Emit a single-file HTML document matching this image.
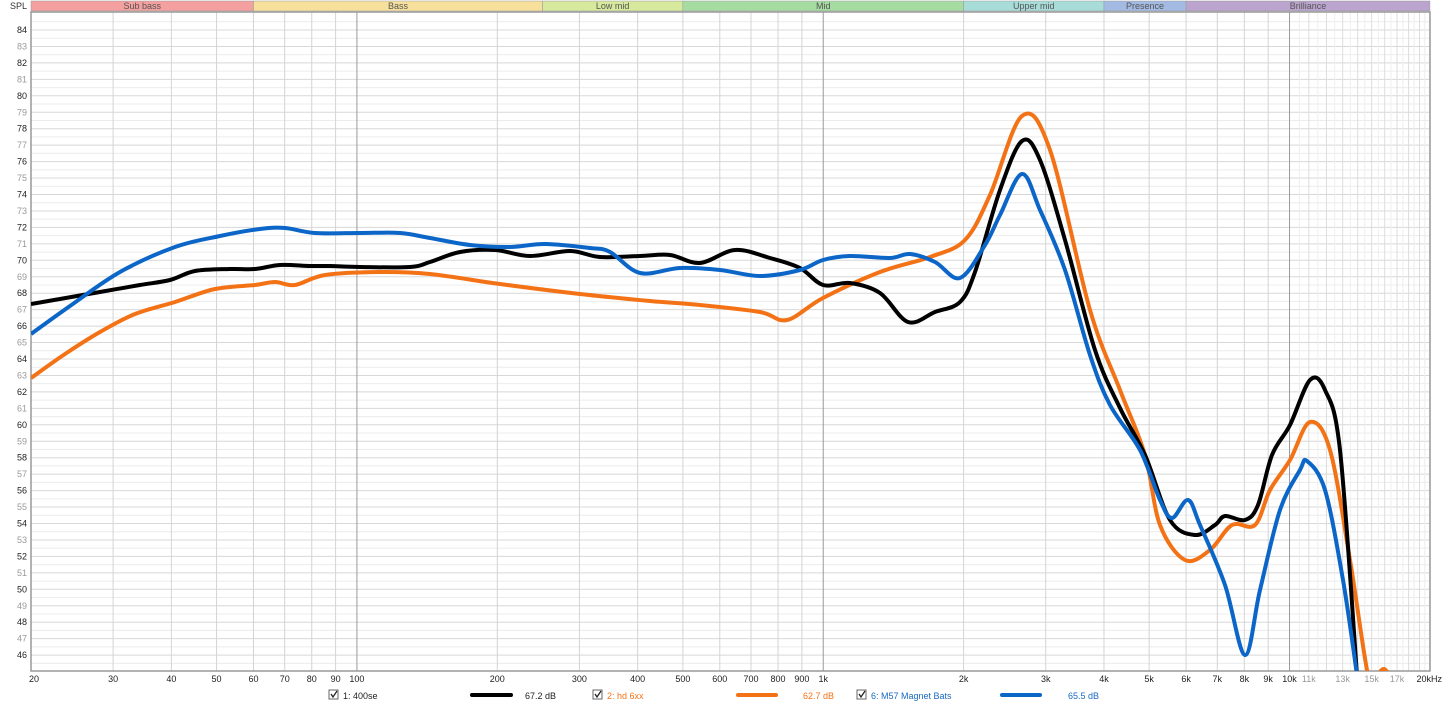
<!DOCTYPE html>
<html><head><meta charset="utf-8"><style>
body{margin:0;background:#fff;width:1445px;height:706px;overflow:hidden;font-family:"Liberation Sans",Arial,sans-serif}
</style></head><body>
<svg id="s" width="1445" height="706" xmlns="http://www.w3.org/2000/svg" font-family="Liberation Sans, Arial, sans-serif"></svg>
<script>
const s=document.getElementById('s');let h='';
const X0=31,X1=1430,Y0=12,Y1=671,D=466.3;
const fx=f=>X0+D*Math.log10(f/20);
const yd=d=>30+(84-d)*16.45;
const bands=[[20,60,'#f4a0a0','Sub bass'],[60,250,'#f7df9c','Bass'],[250,500,'#d6e99c','Low mid'],[500,2000,'#a6dca2','Mid'],[2000,4000,'#a8dcd8','Upper mid'],[4000,6000,'#a3bbe2','Presence'],[6000,20000,'#bba5cf','Brilliance']];
h+=`<text x="27" y="9" font-size="9" text-anchor="end" fill="#333">SPL</text>`;
for(const b of bands){const a=fx(b[0]),c=Math.min(fx(b[1]),X1);h+=`<rect x="${a}" y="1" width="${c-a}" height="10" fill="${b[2]}" stroke="#999" stroke-width="0.5"/><text x="${(a+c)/2}" y="9" font-size="9" text-anchor="middle" fill="#555">${b[3]}</text>`;}
for(let d=84.5;d>=45;d-=0.5){const y=yd(d);if(y<Y0+2||y>Y1)continue;const maj=Number.isInteger(d);h+=`<line x1="${X0}" x2="${X1}" y1="${y}" y2="${y}" stroke="${maj?'#d8d8d8':'#ececec'}" stroke-width="1"/>`;}
for(let d=84;d>=46;d--){h+=`<text x="27" y="${yd(d)+3}" font-size="9" text-anchor="end" fill="${d%2?'#999':'#222'}">${d}</text>`;}
const fs=[];for(let dec=10;dec<=10000;dec*=10)for(let m=1;m<10;m++){const f=dec*m;if(f>=20&&f<=20000)fs.push(f);}fs.push(20000);
for(const f of fs){const x=fx(f);const maj=(f==100||f==1000||f==10000);h+=`<line x1="${x}" x2="${x}" y1="${Y0}" y2="${Y1}" stroke="${maj?'#999':'#d4d4d4'}" stroke-width="1"/>`;}
for(let f=10500;f<20000;f+=500){if(f%1000==0)continue;const x=fx(f);h+=`<line x1="${x}" x2="${x}" y1="${Y0}" y2="${Y1}" stroke="#eee" stroke-width="1"/>`;}
for(const f of [11000,12000,13000,14000,15000,16000,17000,18000,19000]){const x=fx(f);h+=`<line x1="${x}" x2="${x}" y1="${Y0}" y2="${Y1}" stroke="#ddd" stroke-width="1"/>`;}
h+=`<rect x="${X0}" y="${Y0}" width="${X1-X0}" height="${Y1-Y0}" fill="none" stroke="#999" stroke-width="1.5"/>`;
const xl=[[20,'20'],[30,'30'],[40,'40'],[50,'50'],[60,'60'],[70,'70'],[80,'80'],[90,'90'],[100,'100'],[200,'200'],[300,'300'],[400,'400'],[500,'500'],[600,'600'],[700,'700'],[800,'800'],[900,'900'],[1000,'1k'],[2000,'2k'],[3000,'3k'],[4000,'4k'],[5000,'5k'],[6000,'6k'],[7000,'7k'],[8000,'8k'],[9000,'9k'],[10000,'10k'],[11000,'11k',1],[13000,'13k',1],[15000,'15k',1],[17000,'17k',1]];
for(const l of xl){h+=`<text x="${fx(l[0])+(l[0]==20?3:0)}" y="682" font-size="9" text-anchor="middle" fill="${l[2]?'#999':'#222'}">${l[1]}</text>`;}
h+=`<text x="1442" y="682" font-size="9" text-anchor="end" fill="#222">20kHz</text>`;
function path(p,c){let d=`M${p[0][0]},${p[0][1]}`;for(let i=0;i<p.length-1;i++){const a=p[Math.max(i-1,0)],b=p[i],c2=p[i+1],e=p[Math.min(i+2,p.length-1)];d+=` C${b[0]+(c2[0]-a[0])/6},${b[1]+(c2[1]-a[1])/6} ${c2[0]-(e[0]-b[0])/6},${c2[1]-(e[1]-b[1])/6} ${c2[0]},${c2[1]}`;}return `<path d="${d}" fill="none" stroke="${c}" stroke-width="4" stroke-linejoin="round" clip-path="url(#cp)"/>`;}
h+=`<defs><clipPath id="cp"><rect x="${X0}" y="${Y0}" width="${X1-X0}" height="${Y1-Y0}"/></clipPath></defs>`;
const O=[[31,378],[65,354],[100,332],[135,314],[175,302],[215,289],[255,285],[275,282],[295,285],[325,275],[380,272],[430,274],[500,284],[580,294],[650,301],[700,305],[760,312],[787,320],[823,298],[880,272],[930,257],[965,240],[990,195],[1022,116],[1050,150],[1090,310],[1120,390],[1145,455],[1160,525],[1185,560],[1210,550],[1232,525],[1255,525],[1270,490],[1290,460],[1310,422],[1330,450],[1350,560],[1368,675],[1376,676],[1384,669],[1392,680]];
const B=[[31,304],[60,299],[100,292],[140,285],[170,280],[195,271],[230,269],[255,269],[280,265],[310,266],[330,266],[360,267],[410,267],[430,262],[460,252],[495,250],[530,256],[570,251],[600,257],[640,256],[670,255],[700,263],[735,250],[770,258],[800,268],[823,285],[850,283],[880,293],[908,322],[935,312],[960,302],[975,272],[1000,190],[1022,141],[1040,160],[1065,240],[1095,350],[1120,408],[1145,455],[1170,520],[1195,535],[1215,525],[1225,516],[1245,520],[1258,505],[1272,455],[1290,425],[1310,380],[1325,390],[1340,450],[1357,675]];
const L=[[31,334],[70,306],[120,272],[175,247],[220,236],[260,229],[285,228],[315,233],[360,233],[400,233],[430,238],[470,245],[510,247],[545,244],[590,248],[610,252],[640,273],[680,268],[720,270],[760,276],[800,270],[823,260],[850,256],[890,258],[910,254],[935,262],[960,278],[985,245],[1000,215],[1022,174],[1040,210],[1065,270],[1090,355],[1110,405],[1140,450],[1160,500],[1172,518],[1188,500],[1200,525],[1225,585],[1245,655],[1260,590],[1280,510],[1300,470],[1307,461],[1325,490],[1343,580],[1357,675]];
h+=path(O,'#f47216')+path(B,'#000')+path(L,'#0b66c8');
const leg=[[329,'1: 400se','#222',472,511,'#000','67.2 dB',525],[593,'2: hd 6xx','#f47216',738,776,'#f47216','62.7 dB',803],[857,'6: M57 Magnet Bats','#1a6ac0',1002,1040,'#0b66c8','65.5 dB',1068]];
for(const l of leg){const x=l[0];h+=`<rect x="${x}" y="690" width="9" height="9" fill="#fff" stroke="#666"/><path d="M${x+2},694 l2,3 l4,-6" fill="none" stroke="#222" stroke-width="1.3"/><text x="${x+14}" y="699" font-size="9" fill="${l[2]}">${l[1]}</text><line x1="${l[3]}" x2="${l[4]}" y1="695" y2="695" stroke="${l[5]}" stroke-width="4" stroke-linecap="round"/><text x="${l[7]}" y="699" font-size="9" fill="${l[2]}">${l[6]}</text>`;}
s.innerHTML=h;
</script>
</body></html>
